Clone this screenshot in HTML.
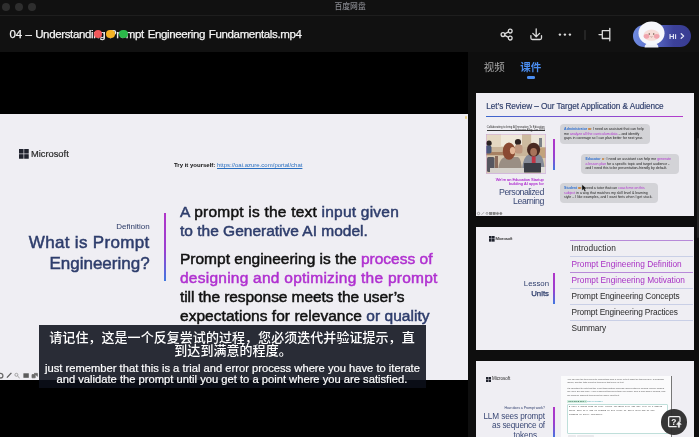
<!DOCTYPE html>
<html><head><meta charset="utf-8">
<title>04 – Understanding Prompt Engineering Fundamentals.mp4</title>
<style>
html,body{margin:0;padding:0;}
body{width:699px;height:437px;overflow:hidden;background:#0e0e0e;position:relative;font-family:"Liberation Sans","Noto Sans CJK SC",sans-serif;}
.abs{position:absolute;}
.t{position:absolute;white-space:nowrap;line-height:1;}
#titlebar{left:0;top:0;width:699px;height:15px;background:#111;border-bottom:1px solid #1e1e1e;}
.tl{position:absolute;top:2.9px;width:8.2px;height:8.2px;border-radius:50%;background:#2e2e2e;}
#hdr{left:0;top:16px;width:699px;height:36px;background:#111;}
#video{left:0;top:52px;width:468px;height:385px;background:#000;}
#slide{left:0;top:114.3px;width:468px;height:265.5px;background:#efeef3;}
.seg{color:#111;-webkit-text-stroke:0.5px currentColor;}
.navy{color:#2e3d6c;}
.mag{color:#b030d0;}
#sub{left:39px;top:325px;width:386.8px;height:63.4px;background:rgba(12,15,25,0.87);}
.thumb{position:absolute;left:475.5px;width:218.5px;height:123px;background:#efeef3;overflow:hidden;}
.vbar{position:absolute;width:2px;background:linear-gradient(#b035c8,#9a3fd0 55%,#3f78e0);}
.dot{position:absolute;width:8.4px;height:8.4px;border-radius:50%;}

.bub{position:absolute;background:#d3d3d7;border-radius:4px;box-sizing:border-box;padding:3.4px 0 0 4.6px;font-size:3.52px;line-height:4.5px;color:#222;white-space:nowrap;}
.b1{color:#2f6fd0;}
.em{display:inline-block;width:2.6px;height:2.6px;border-radius:0.7px;background:#c98a4a;margin:0 0.2px;vertical-align:-0.2px}
.ln{position:absolute;left:94px;width:123px;height:0.8px;background:#c9cfe6;}
.row{position:absolute;left:96px;font-size:8.3px;line-height:1;margin-top:-0.1px;white-space:nowrap;color:#2a2a2a;}
.row.mag{color:#a830c4;}
.para{position:absolute;font-size:2.3px;line-height:3.55px;color:#555;white-space:nowrap;}
.mono{position:absolute;font-family:"Liberation Mono",monospace;font-size:2.13px;line-height:4.1px;color:#333;white-space:nowrap;}
#app{position:absolute;left:0;top:0;width:699px;height:437px;will-change:transform;filter:blur(0.5px);}
</style></head><body><div id="app">
<!-- window chrome -->
<div id="titlebar" class="abs"></div>
<div class="tl" style="left:2px"></div><div class="tl" style="left:15px"></div><div class="tl" style="left:28px"></div>
<div class="t" id="wt" style="left:334.5px;top:3px;font-size:7.8px;color:#85868c;font-weight:500;">百度网盘</div>
<div id="hdr" class="abs"></div>
<div class="t" id="title" style="letter-spacing:-0.36px;word-spacing:0.9px;left:9.6px;top:28.6px;font-size:11.5px;color:#f4f4f4;-webkit-text-stroke:0.25px #f4f4f4;">04 – Understanding Prompt Engineering Fundamentals.mp4</div>
<div class="dot" style="left:93.8px;top:29.8px;background:#f0585a"></div>
<div class="dot" style="left:106.3px;top:29.8px;background:#f5b325"></div>
<div class="dot" style="left:119.3px;top:29.8px;background:#2bb94a"></div>

<!-- video -->
<div id="video" class="abs"></div>
<div id="slide" class="abs"></div>
<svg class="abs" style="left:18.6px;top:148.8px" width="10.6" height="10.6" viewBox="0 0 10 10"><g fill="#20232e"><rect x="0" y="0" width="4.3" height="4.3"/><rect x="4.9" y="0" width="4.3" height="4.3"/><rect x="0" y="4.9" width="4.3" height="4.3"/><rect x="4.9" y="4.9" width="4.3" height="4.3"/></g></svg>
<div class="t" id="ms" style="left:31px;top:149.5px;font-size:9.3px;color:#2a2a2a;-webkit-text-stroke:0.2px #2a2a2a">Microsoft</div>
<div class="t" id="try" style="left:174px;top:162.1px;font-size:6px;color:#111"><b>Try it yourself:</b> <span style="color:#2a6fc0;text-decoration:underline">https://oai.azure.com/portal/chat</span></div>
<div class="t" id="def" style="right:549.4px;top:223px;font-size:8px;color:#2b3a67">Definition</div>
<div class="t seg navy" id="h1" style="letter-spacing:0.33px;right:549.4px;top:234px;font-size:17px;">What is Prompt</div>
<div class="t seg navy" id="h2" style="right:549.4px;top:255.4px;font-size:17px;">Engineering?</div>
<div class="vbar" style="left:163.8px;top:213px;height:67.5px;width:2.5px"></div>
<div class="t seg navy" id="l1" style="letter-spacing:0.22px;left:180px;top:204.4px;font-size:15.5px;">A <span style="color:#111">prompt is the text</span> input given</div>
<div class="t seg navy" id="l2" style="left:180px;top:223.4px;font-size:15.5px;">to the Generative AI model.</div>
<div class="t seg" id="l3" style="left:180px;top:251px;font-size:15.5px;">Prompt engineering is the <span class="mag">process of</span></div>
<div class="t seg mag" id="l4" style="letter-spacing:0.245px;left:180px;top:270px;font-size:15.5px;">designing and optimizing the prompt</div>
<div class="t seg" id="l5" style="letter-spacing:-0.07px;left:180px;top:289px;font-size:15.5px;">till the response meets the user’s</div>
<div class="t seg" id="l6" style="letter-spacing:0.04px;left:180px;top:307.5px;font-size:15.5px;">expectations for relevance <span class="navy">or quality</span></div>
<!-- slide mini toolbar -->
<svg class="abs" style="left:0;top:369px" width="40" height="11" viewBox="0 369 40 11"><g fill="none" stroke="#6a6a6a" stroke-width="1.3"><circle cx="0.6" cy="375.7" r="2.3"/><path d="M6.9 377.6 L11.4 372.9" stroke="#5a5a5a"/><circle cx="16.4" cy="374.8" r="1.5" stroke="#9a9a9a" stroke-width="0.9"/><path d="M17.6 376.2 L19.6 378" stroke="#9a9a9a" stroke-width="1"/><rect x="23.4" y="373.3" width="5.4" height="4.5" fill="#5c5c5c" stroke="none"/><path d="M32 374.6 h3.2 v3.2 h-3.2z M34 373.4 h3.4 v3.2" fill="#6a6a6a" stroke="#6a6a6a" stroke-width="0.8"/></g></svg>
<!-- subtitles -->
<div id="sub" class="abs"></div>
<div class="t" id="c1" style="left:49.3px;top:330.5px;font-size:13px;color:#fff;font-weight:500;letter-spacing:0.05px">请记住，这是一个反复尝试的过程，您必须迭代并验证提示，直</div>
<div class="t" id="c2" style="left:174.3px;top:344.3px;font-size:13px;color:#fff;font-weight:500;letter-spacing:0.05px">到达到满意的程度。</div>
<div class="t" id="e1" style="left:45px;top:363.3px;font-size:11.2px;color:#fff;-webkit-text-stroke:0.2px #fff">just remember that this is a trial and error process where you have to iterate</div>
<div class="t" id="e2" style="left:56.5px;top:374px;font-size:11.2px;color:#fff;-webkit-text-stroke:0.2px #fff">and validate the prompt until you get to a point where you are satisfied.</div>

<!-- header icons -->
<svg class="abs" style="left:498px;top:26px" width="118" height="18" viewBox="498 26 118 18" fill="none" stroke="#dcdcdc" stroke-width="1.3" stroke-linecap="round" stroke-linejoin="round">
 <circle cx="503" cy="34.6" r="1.9"/><circle cx="510.2" cy="31.1" r="1.9"/><circle cx="510.2" cy="38.1" r="1.9"/><path d="M504.7 33.8 L508.5 31.9 M504.7 35.4 L508.5 37.3"/>
 <path d="M536.2 28.8 V36.6 M532.8 33.4 L536.2 36.8 L539.6 33.4"/><path d="M530.9 35.6 V38 Q530.9 39.5 532.4 39.5 H540 Q541.5 39.5 541.5 38 V35.6"/>
 <g fill="#dcdcdc" stroke="none"><circle cx="559.9" cy="34.6" r="1.2"/><circle cx="564.9" cy="34.6" r="1.2"/><circle cx="569.9" cy="34.6" r="1.2"/></g>
 <path d="M585 30.5 V39.5" stroke="#3a3a3a" stroke-width="1"/>
 <path d="M609.8 28.3 V40.8 M602.3 30.7 H609.8 M602.3 38.5 H609.8 M602.3 30.7 V38.5 M599 34.6 H602.3"/>
</svg>
<!-- Hi pill -->
<div class="abs" id="pill" style="left:633px;top:25px;width:58px;height:22.4px;border-radius:11.2px;background:linear-gradient(90deg,#6f8be0 0%,#5a6cc8 35%,#3c4199 70%,#383c92 100%);"></div>
<svg class="abs" style="left:636px;top:20px" width="32" height="29" viewBox="636 20 32 29">
 <defs><clipPath id="pc"><rect x="633" y="18" width="58" height="29.4" rx="11.2"/></clipPath></defs>
 <g clip-path="url(#pc)">
 <path d="M644.5 48 Q644.5 42.5 651.5 42.5 Q658.5 42.5 658.5 48 Z" fill="#eef0f8"/>
 <ellipse cx="651.5" cy="33.2" rx="13" ry="11.8" fill="#f6f7fb"/>
 <ellipse cx="651.5" cy="35.2" rx="8" ry="5.6" fill="#f6ddd8"/>
 <ellipse cx="646.5" cy="36.3" rx="2.8" ry="2.4" fill="#f0a3ac"/><ellipse cx="656.7" cy="36.3" rx="2.8" ry="2.4" fill="#f0a3ac"/>
 <circle cx="649.3" cy="34" r="0.7" fill="#5a4a3a"/><circle cx="653.7" cy="34" r="0.7" fill="#5a4a3a"/>
 <path d="M650.5 36.6 Q651.5 37.5 652.5 36.6" stroke="#8a5a4a" stroke-width="0.5" fill="none"/>
 </g>
</svg>
<div class="t" id="hi" style="left:669px;top:32.6px;font-size:7.6px;font-weight:bold;color:#e3e6f5;">Hi</div>
<svg class="abs" style="left:679px;top:31.4px" width="8" height="10" viewBox="0 0 8 10"><path d="M2.2 2.8 L4.6 5 L2.2 7.2" fill="none" stroke="#e3e6f5" stroke-width="1.3" stroke-linecap="round" stroke-linejoin="round"/></svg>
<!-- tabs -->
<div class="t" id="tab1" style="left:483.8px;top:62px;font-size:10.5px;color:#a8a8a8;">视频</div>
<div class="t" id="tab2" style="left:520.3px;top:62px;font-size:10.5px;color:#4a8df0;font-weight:bold;">课件</div>
<div class="abs" style="left:526.5px;top:76.4px;width:8.7px;height:2.5px;border-radius:1.3px;background:#4a8df0"></div>
<div class="abs" style="left:696.8px;top:138px;width:2.2px;height:100px;border-radius:1px;background:#242424"></div>
<div class="abs" style="left:465.2px;top:116px;width:2px;height:3px;background:#e8d08a;border-radius:0.8px"></div>

<!-- thumbnail 1 -->
<div class="thumb" id="th1" style="top:93px;">
 <div class="t navy" id="t1title" style="left:10.8px;top:9.8px;font-size:8.2px;letter-spacing:-0.046px;-webkit-text-stroke:0.15px #2b3a67">Let’s Review – Our Target Application &amp; Audience</div>
 <div class="abs" style="left:10.5px;top:23.2px;width:197px;height:1px;background:linear-gradient(90deg,#3a66cc,#7a4ed0 45%,#b53ccc)"></div>
 <div class="t" id="cap1" style="right:149.2px;top:34.1px;font-size:2.7px;color:#2a2a2a;">Collaborating to bring AI Innovation To Education</div>
 <div class="abs" style="left:11.2px;top:36.75px;width:58.1px;height:0.4px;background:#333"></div>
 <div class="t" id="cap2" style="right:149.2px;top:37.3px;font-size:2.7px;color:#2a2a2a;font-style:italic">– Educator Blog, Jun 2023</div>
 <svg class="abs" id="photo" style="left:10px;top:41.4px;" width="60" height="39.8" viewBox="0 0 60 39.8">
  <defs><filter id="pb" x="-5%" y="-5%" width="110%" height="110%"><feGaussianBlur stdDeviation="0.55"/></filter><clipPath id="pcl"><rect x="0" y="0" width="60" height="39.8"/></clipPath></defs>
  <g clip-path="url(#pcl)"><g filter="url(#pb)">
   <rect x="-2" y="-2" width="64" height="44" fill="#d8c8b0"/>
   <rect x="-2" y="-2" width="64" height="15" fill="#e4d8c2"/>
   <rect x="15" y="-2" width="21" height="14" fill="#efe8da"/>
   <rect x="36" y="-2" width="9" height="16" fill="#cdbb9f"/>
   <rect x="45.5" y="-2" width="16" height="15" fill="#ebe5d8"/>
   <rect x="53" y="4" width="3" height="9" fill="#7d8288"/>
   <rect x="-2" y="13" width="64" height="9" fill="#c9b59a"/>
   <rect x="-2" y="18" width="22" height="3" fill="#a78163"/>
   <rect x="52" y="14" width="10" height="10" fill="#c2a27c"/>
   <circle cx="3" cy="9.3" r="2.7" fill="#2a2220"/>
   <rect x="-1" y="11.5" width="6.5" height="8" rx="2" fill="#4a5878"/>
   <rect x="1" y="23" width="7.5" height="15" rx="1.5" fill="#56575e"/>
   <rect x="9" y="22" width="3" height="12" fill="#8a6a5a"/>
   <circle cx="32" cy="8" r="3.1" fill="#2e2420"/>
   <rect x="29" y="10.5" width="7.5" height="9" rx="2.5" fill="#bf9880"/>
   <path d="M12 40 Q12 25 19 23 H32 Q36 25 36 40 Z" fill="#9a8e84"/>
   <ellipse cx="23" cy="17.2" rx="6.2" ry="8.6" fill="#8a4a30"/>
   <ellipse cx="26.6" cy="16.6" rx="2.7" ry="3.7" fill="#e3b596"/>
   <path d="M36 36 Q37 22 43 20.5 H53 Q58 22 58.5 36 Z" fill="#868b98"/>
   <ellipse cx="47.6" cy="15.8" rx="6.6" ry="7" fill="#4a2c22"/>
   <ellipse cx="47.6" cy="18" rx="3.4" ry="3.9" fill="#a7735a"/>
   <rect x="45.8" y="22.5" width="3.8" height="7" fill="#c23444"/>
   <rect x="4" y="34" width="35" height="7" fill="#d6d2cc"/>
   <rect x="55" y="33" width="6" height="8" fill="#e2dfda"/>
   <rect x="38" y="29" width="17" height="9.6" rx="0.6" fill="#3b3e44"/>
  </g></g>
  <rect x="0.15" y="0.15" width="59.7" height="39.5" fill="none" stroke="#c79ae0" stroke-width="0.5"/>
 </svg>
 <div class="vbar" style="left:77.7px;top:45.6px;height:31.4px;width:1.6px"></div>
 <div class="t mag" id="we1" style="right:150.2px;top:84.8px;font-size:3.95px;-webkit-text-stroke:0.12px #b030d0">We’re an Education Startup</div>
 <div class="t mag" id="we2" style="right:150.2px;top:89.1px;font-size:3.95px;letter-spacing:0.07px;-webkit-text-stroke:0.12px #b030d0">building AI apps for</div>
 <div class="t" id="pers" style="color:#3b4976;right:150.1px;top:94.9px;font-size:8.8px;letter-spacing:-0.5px;">Personalized</div>
 <div class="t" id="learn" style="color:#3b4976;right:150.1px;top:104.1px;font-size:8.8px;letter-spacing:-0.42px;">Learning</div>
 <div class="bub" style="left:84px;top:30.8px;width:90px;height:20.6px;"><b class="b1">Administrator <i class="em"></i></b>: I need an assistant that can help<br>me <span class="mag">analyze all the curriculum data</span> – and identify<br>gaps in coverage so I can plan better for next year.</div>
 <div class="bub" style="left:105.3px;top:60.8px;width:98px;height:19.8px;"><b class="b1">Educator <i class="em"></i></b>: I need an assistant can help me <span class="mag">generate<br>a lesson plan</span> for a specific topic and target audience -<br>and I need this to be presentation-friendly by default.</div>
 <div class="bub" style="left:84px;top:89.5px;width:98.7px;height:20.4px;padding-top:3.8px"><b class="b1">Student <i class="em"></i></b>: I need a tutor that can <span class="mag">coach me on this<br>subject</span> in a way that matches my skill level &amp; learning<br>style – I like examples, and I want hints when I get stuck.</div>
 <svg class="abs" style="left:0;top:117.5px" width="30" height="5" viewBox="0 0 30 5"><g fill="none" stroke="#777" stroke-width="0.6"><circle cx="2.5" cy="2.5" r="1.2"/><path d="M5.5 3.8 L8 1.2"/><circle cx="11" cy="2.4" r="1"/><rect x="13.6" y="1.4" width="2.2" height="2.2" fill="#888"/><rect x="17" y="1.4" width="2.2" height="2.2" fill="#888"/><circle cx="21.5" cy="2.5" r="1.1" fill="#888"/><circle cx="24.8" cy="2.5" r="1.1" fill="#888"/></g></svg>
 <svg class="abs" style="left:105px;top:90.6px" width="7" height="8" viewBox="0 0 7 8"><path d="M0.9 0.5 L0.9 6.6 L2.5 5.3 L3.6 7.5 L4.9 6.9 L3.8 4.8 L5.9 4.7 Z" fill="#0c0c0c" stroke="#f4f4f4" stroke-width="0.35"/></svg>
</div>

<!-- thumbnail 2 -->
<div class="thumb" id="th2" style="top:226.5px;">
 <svg class="abs" style="left:13.4px;top:9.6px" width="6" height="6" viewBox="0 0 10 10"><g fill="#20232e"><rect x="0" y="0" width="4.4" height="4.4"/><rect x="5" y="0" width="4.4" height="4.4"/><rect x="0" y="5" width="4.4" height="4.4"/><rect x="5" y="5" width="4.4" height="4.4"/></g></svg>
 <div class="t" style="left:20px;top:10.2px;font-size:4.2px;color:#2a2a2a;-webkit-text-stroke:0.1px #2a2a2a">Microsoft</div>
 <div class="ln" style="top:13.4px;background:#b78ad8"></div>
 <div class="row" style="top:17.7px;letter-spacing:0.09px">Introduction</div>
 <div class="ln" style="top:29.2px"></div>
 <div class="row mag" style="top:33.6px">Prompt Engineering Definition</div>
 <div class="ln" style="top:45.1px;background:#b78ad8"></div>
 <div class="row mag" style="top:49.1px">Prompt Engineering Motivation</div>
 <div class="ln" style="top:61.1px"></div>
 <div class="row" style="top:65.3px;letter-spacing:-0.096px">Prompt Engineering Concepts</div>
 <div class="ln" style="top:77.1px"></div>
 <div class="row" style="top:81.3px;letter-spacing:-0.12px">Prompt Engineering Practices</div>
 <div class="ln" style="top:93.1px"></div>
 <div class="row" style="top:97.9px;letter-spacing:-0.15px">Summary</div>
 <div class="t navy" style="right:145px;top:53.2px;font-size:7.8px;">Lesson</div>
 <div class="t navy" style="right:145px;top:63.2px;font-size:7.8px;-webkit-text-stroke:0.25px #2b3a67">Units</div>
 <div class="vbar" style="left:77.7px;top:46px;height:31.3px;width:1.6px"></div>
</div>

<!-- thumbnail 3 -->
<div class="thumb" id="th3" style="top:361px;height:80px">
 <svg class="abs" style="left:10.2px;top:15.8px" width="5.4" height="5.4" viewBox="0 0 10 10"><g fill="#20232e"><rect x="0" y="0" width="4.4" height="4.4"/><rect x="5" y="0" width="4.4" height="4.4"/><rect x="0" y="5" width="4.4" height="4.4"/><rect x="5" y="5" width="4.4" height="4.4"/></g></svg>
 <div class="t" style="left:16.6px;top:16.2px;font-size:4.5px;color:#2a2a2a;">Microsoft</div>
 <div class="t navy" id="how" style="right:149.1px;top:45.8px;font-size:3.5px;letter-spacing:-0.03px;">How does a Prompt work?</div>
 <div class="t" id="llm1" style="color:#3b4976;right:149.1px;top:51.6px;font-size:8.2px;letter-spacing:-0.12px;">LLM sees prompt</div>
 <div class="t" id="llm2" style="color:#3b4976;right:149.1px;top:61.2px;font-size:8.2px;letter-spacing:-0.19px;">as sequence of</div>
 <div class="t" id="llm3" style="color:#3b4976;right:150px;top:70.8px;font-size:8.2px;letter-spacing:-0.1px;">tokens <span style="font-size:5px">…</span></div>
 <div class="vbar" style="left:77.7px;top:45.8px;height:31.3px;width:1.6px"></div>
 <div class="abs" style="left:85.6px;top:14.6px;width:110.2px;height:66px;background:#fbfbfc;"></div>
 <div class="abs" style="left:195.8px;top:14.6px;width:0.7px;height:66px;background:#777;"></div>
 <div class="para" style="left:91.7px;top:16.65px;">You can use the tool below to understand how a piece of text might be tokenized by a language<br>model, and the total count of tokens in that piece of text.</div>
 <div class="para" style="left:91.7px;top:25.75px;">It’s important to note that the exact tokenization process varies between models. Newer models<br>like GPT-3.5 and GPT-4 use a different tokenizer than our legacy GPT-3 and Codex models, and<br>will produce different tokens for the same input text.</div>
 <div class="t" style="left:91.9px;top:38.8px;font-size:2.3px;color:#1a5a40;background:#d2eee0;padding:0.6px 0.8px;font-weight:bold">GPT-3.5 &amp; GPT-4</div>
 <div class="t" style="left:111.4px;top:39.4px;font-size:2.3px;color:#3aa0a8;">GPT-3 (Legacy)</div>
 <div class="abs" style="left:91.9px;top:43.3px;width:99px;height:27.6px;border:0.5px solid #bfdfda;border-radius:1px;background:#fff;"></div>
 <div class="mono" style="left:93.5px;top:43.9px;">I have a dream that my four little children will one day live in a nation<br>where they will not be judged by the color of their skin but by the<br>content of their character.</div>
 <div class="t" style="left:92.2px;top:74.1px;font-size:2.2px;color:#444;background:#e9e9ec;padding:0.6px 1.4px;border-radius:0.6px">Clear</div>
 <div class="t" style="left:101.6px;top:74.1px;font-size:2.2px;color:#444;background:#e9e9ec;padding:0.6px 1.4px;border-radius:0.6px">Show example</div>
</div>
<!-- floating help button -->
<div class="abs" id="fab" style="left:661.3px;top:409px;width:25.7px;height:25.7px;border-radius:50%;background:rgba(46,46,46,0.96);"></div>
<svg class="abs" style="left:661px;top:409px" width="27" height="27" viewBox="661 409 27 27"><path d="M680 421.4 V417.9 Q680 416.7 678.8 416.7 H669.8 Q668.6 416.7 668.6 417.9 V425.5 Q668.6 426.7 669.8 426.7 H676.2" fill="none" stroke="#efefef" stroke-width="1.3" stroke-linecap="round"/><path d="M678.9 421.4 L681.3 424.4 H679.7 V427.3 H678.1 V424.4 H676.5 Z" fill="#efefef" stroke="#efefef" stroke-width="0.5" stroke-linejoin="round"/></svg>
<div class="t" id="q" style="left:671.3px;top:417.6px;font-size:8.4px;font-weight:bold;color:#efefef;">?</div>
</div></body></html>
